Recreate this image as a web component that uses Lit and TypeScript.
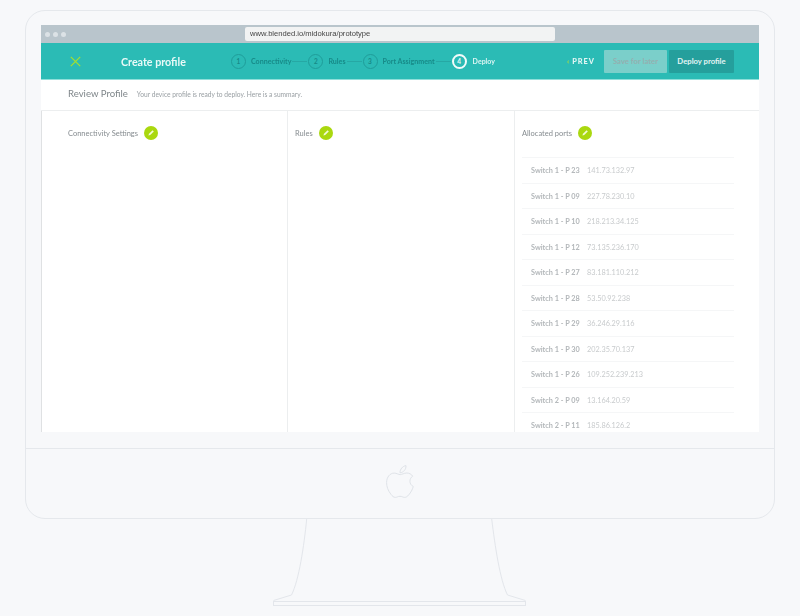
import { LitElement, html, css } from "lit";
import { customElement } from "lit/decorators.js";

const PORTS: [string, string][] = [
  ["Switch 1 - P 23", "141.73.132.97"],
  ["Switch 1 - P 09", "227.78.230.10"],
  ["Switch 1 - P 10", "218.213.34.125"],
  ["Switch 1 - P 12", "73.135.236.170"],
  ["Switch 1 - P 27", "83.181.110.212"],
  ["Switch 1 - P 28", "53.50.92.238"],
  ["Switch 1 - P 29", "36.246.29.116"],
  ["Switch 1 - P 30", "202.35.70.137"],
  ["Switch 1 - P 26", "109.252.239.213"],
  ["Switch 2 - P 09", "13.164.20.59"],
  ["Switch 2 - P 11", "185.86.126.2"],
];

const STEPS = [
  { n: "1", label: "Connectivity", gap: "15px" },
  { n: "2", label: "Rules", gap: "15px" },
  { n: "3", label: "Port Assignment", gap: "15px" },
];

@customElement("app-root")
export class AppRoot extends LitElement {
  static styles = css`
    :host {
      display: block;
      width: 800px;
      height: 616px;
      overflow: hidden;
      background: #f7f8fa;
      font-family: Lato, "Open Sans", sans-serif;
    }
    * { box-sizing: border-box; }
    .monitor {
      width: 750px;
      height: 509px;
      margin: 10px 0 0 25px;
      padding-top: 14px;
      border: 1px solid #e5e8ec;
      border-radius: 20px;
      display: flex;
      flex-direction: column;
    }
    .screen {
      width: 718px;
      height: 407px;
      margin-left: 15px;
      background: #fff;
      overflow: hidden;
      display: flex;
      flex-direction: column;
      flex: none;
    }
    .chrome {
      height: 18px;
      flex: none;
      background: #b9c5cc;
      display: flex;
      align-items: center;
      padding-left: 4px;
    }
    .dot {
      width: 5px;
      height: 5px;
      margin-right: 3px;
      border-radius: 50%;
      background: #dce2e6;
    }
    .url {
      width: 310px;
      height: 14px;
      margin-left: 176px;
      padding-left: 5px;
      border-radius: 2px;
      background: #f2f3f3;
      color: #444;
      font: 7.6px/14px "Liberation Sans", sans-serif;
      filter: blur(0.2px);
    }
    .bar {
      height: 37px;
      flex: none;
      background: #2bbbb5;
      border-bottom: 1px solid #8fdfda;
      display: flex;
      align-items: center;
      padding-right: 25px;
    }
    .close { margin-left: 29px; flex: none; display: block; }
    .title {
      margin-left: 40px;
      width: 110px;
      color: #eafaf8;
      font-size: 10.7px;
      font-weight: 700;
      filter: blur(0.3px);
    }
    .steps { display: flex; align-items: center; flex: none; }
    .circle {
      width: 15px;
      height: 15px;
      border: 1px solid #1f9d9a;
      border-radius: 50%;
      color: #178a88;
      font-size: 6.5px;
      font-weight: 700;
      display: flex;
      align-items: center;
      justify-content: center;
      flex: none;
    }
    .circle.on { border: 2px solid #f2fbfa; color: #eafaf8; }
    .label {
      margin-left: 5px;
      color: #178a88;
      font-size: 7.1px;
      font-weight: 700;
      filter: blur(0.25px);
      white-space: nowrap;
    }
    .label.on { margin-left: 6px; color: #dcf5f3; font-size: 7px; }
    .link { height: 1px; margin: 0 1px; background: #26a8a4; flex: none; }
    .actions { margin-left: auto; display: flex; align-items: center; }
    .prev {
      margin-right: 9px;
      color: #e2f6f4;
      font-size: 7.4px;
      font-weight: 900;
      letter-spacing: 1px;
      filter: blur(0.2px);
    }
    .prev i { color: #a9dc3f; font-style: normal; margin-right: 2px; }
    .btn {
      height: 23px;
      border-radius: 1px;
      display: flex;
      align-items: center;
      justify-content: center;
      font-size: 7.7px;
      font-weight: 700;
    }
    .save { width: 63px; margin-right: 2px; background: #7bcfca; color: #94b0b0; }
    .deploy { width: 65px; background: #259f9c; color: #e4f5f4; }
    .review {
      height: 31px;
      flex: none;
      border-bottom: 1px solid #eceeef;
      display: flex;
      align-items: baseline;
      padding: 8px 0 0 27px;
      filter: blur(0.25px);
    }
    .review h1 {
      margin: 0;
      color: #7f868a;
      font-size: 9.6px;
      font-weight: 400;
    }
    .review p {
      margin: 0 0 0 9px;
      color: #9aa0a4;
      font-size: 6.65px;
    }
    .cols {
      flex: 1;
      min-height: 0;
      display: grid;
      grid-template-columns: 246px 227px 245px;
      border-left: 1px solid #dfe1e3;
    }
    .col { border-right: 1px solid #eceeef; padding: 14px 0 0 26px; min-width: 0; }
    .col.two { padding-left: 7px; }
    .col.three { border-right: 0; padding-left: 7px; }
    .head { display: flex; align-items: center; height: 16px; }
    .head span {
      color: #868c90;
      font-size: 7.5px;
      filter: blur(0.2px);
    }
    .pen { margin-left: 6px; flex: none; display: block; }
    .ports { margin: 16px 0 0 0; width: 212px; }
    .port {
      height: 25.5px;
      border-top: 1px solid #f5f6f7;
      padding: 1px 0 0 9px;
      display: flex;
      align-items: center;
      font-size: 7.3px;
      filter: blur(0.35px);
    }
    .port b { width: 56px; color: #b3b7ba; font-weight: 700; flex: none; white-space: nowrap; }
    .port span { color: #c8cbcd; white-space: nowrap; }
    .chin {
      margin-top: 16px;
      border-top: 1px solid #e5e8ec;
      flex: 1;
      display: flex;
      justify-content: center;
      padding-top: 16px;
    }
    .apple { display: block; margin-right: 1px; }
    .stand { display: block; }
  `;

  private pen() {
    return html`<svg class="pen" width="14" height="14" viewBox="0 0 14 14">
      <circle cx="7" cy="7" r="7" fill="#aad80f"></circle>
      <path d="M4.400 9.600 L5 7.800 L8.600 4.200 L9.800 5.400 L6.200 9 Z" fill="#f2fbd9"></path>
    </svg>`;
  }

  render() {
    return html`
      <div class="monitor">
        <div class="screen">
          <div class="chrome">
            <div class="dot"></div><div class="dot"></div><div class="dot"></div>
            <div class="url">www.blended.io/midokura/prototype</div>
          </div>
          <div class="bar">
            <svg class="close" width="11" height="11" viewBox="0 0 11 11">
              <path d="M.8.8 10.200 10.200M10.200.8.8 10.200" stroke="#a6e02c" stroke-width="1.200" fill="none"></path>
            </svg>
            <div class="title">Create profile</div>
            <div class="steps">
              ${STEPS.map(
                (s) => html`<div class="circle">${s.n}</div>
                  <div class="label">${s.label}</div>
                  <div class="link" style="width:${s.gap}"></div>`
              )}
              <div class="circle on">4</div>
              <div class="label on">Deploy</div>
            </div>
            <div class="actions">
              <div class="prev"><i>‹</i>PREV</div>
              <div class="btn save">Save for later</div>
              <div class="btn deploy">Deploy profile</div>
            </div>
          </div>
          <div class="review">
            <h1>Review Profile</h1>
            <p>Your device profile is ready to deploy. Here is a summary.</p>
          </div>
          <div class="cols">
            <div class="col"><div class="head"><span>Connectivity Settings</span>${this.pen()}</div></div>
            <div class="col two"><div class="head"><span>Rules</span>${this.pen()}</div></div>
            <div class="col three">
              <div class="head"><span>Allocated ports</span>${this.pen()}</div>
              <div class="ports">
                ${PORTS.map(
                  ([a, b]) => html`<div class="port"><b>${a}</b><span>${b}</span></div>`
                )}
              </div>
            </div>
          </div>
        </div>
        <div class="chin">
          <svg class="apple" width="28" height="34" viewBox="0 0 28 34" fill="none" stroke="#dfe3e8" stroke-width="1">
            <path d="M14.200 9.600C16 9.600 18 8 20.800 8C23.200 8 25.400 9.200 26.700 11.200C23 13.300 22.800 19.400 27.300 21.500C26.400 24.600 24.800 27.500 22.800 29.800C21.400 31.500 20.200 32.400 18.600 32.400C16.800 32.400 16.200 31.300 14 31.300C11.800 31.300 11 32.400 9.400 32.400C7.600 32.400 6.400 31.200 5 29.400C2 25.600 .6 21.800 .6 17.600C.6 12 4 8.100 8.200 8.100C10.600 8.100 12.400 9.600 14.200 9.600Z"></path>
            <path d="M14 7.800C13.900 4.200 16.800 1 20 .6C20.300 4.300 17.400 7.600 14 7.800Z"></path>
          </svg>
        </div>
      </div>
      <svg class="stand" width="800" height="88" viewBox="0 518 800 88" fill="none" stroke="#e3e6eb" stroke-width="1">
        <path d="M306.700 518C304 545 299 579 291.500 594L273.500 599.500"></path>
        <path d="M491.700 518C495 545 500 579 507.500 594L525.500 599.500"></path>
        <rect x="273.500" y="600.500" width="252" height="4"></rect>
      </svg>
    `;
  }
}
